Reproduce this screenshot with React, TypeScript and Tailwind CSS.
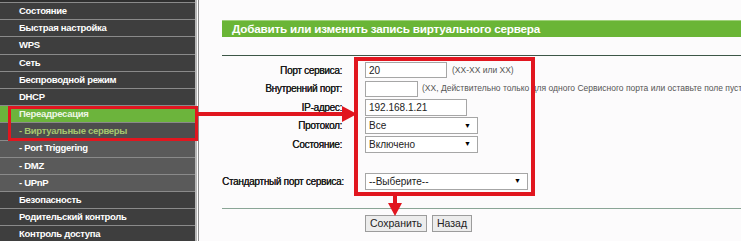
import React from "react";

type Item = { t: string; kind: "main" | "active" | "sub" | "current" };

const menu: Item[] = [
  { t: "Состояние", kind: "main" },
  { t: "Быстрая настройка", kind: "main" },
  { t: "WPS", kind: "main" },
  { t: "Сеть", kind: "main" },
  { t: "Беспроводной режим", kind: "main" },
  { t: "DHCP", kind: "main" },
  { t: "Переадресация", kind: "active" },
  { t: "- Виртуальные серверы", kind: "current" },
  { t: "- Port Triggering", kind: "sub" },
  { t: "- DMZ", kind: "sub" },
  { t: "- UPnP", kind: "sub" },
  { t: "Безопасность", kind: "main" },
  { t: "Родительский контроль", kind: "main" },
  { t: "Контроль доступа", kind: "main" },
];

function rowClass(kind: Item["kind"]) {
  if (kind === "active") return "bg-[#6cb43c] text-[#eef7e4]";
  if (kind === "current") return "bg-[#4d4d4d] text-[#a5c76f]";
  if (kind === "sub") return "bg-[#5a5a5a] text-white";
  return "bg-[#3e3e3e] text-white";
}

function Select({ value, w }: { value: string; w: string }) {
  return (
    <div className={`flex h-[17px] items-center justify-between border border-[#a6a6a6] bg-white pl-[3px] pr-[6px] text-[10px] text-[#222] ${w}`}>
      <span>{value}</span>
      <span className="text-[7px] text-black">▼</span>
    </div>
  );
}

function Row({ label, children }: { label: string; children?: React.ReactNode }) {
  return (
    <div className="flex h-[18.5px] items-center">
      <div className="w-[120px] shrink-0 whitespace-nowrap text-right text-[10px] tracking-[-0.3px] text-[#1a1a1a] [text-shadow:0.2px_0_0_#1a1a1a]">
        {label}
      </div>
      <div className="ml-[23px] flex items-center">{children}</div>
    </div>
  );
}

export default function App() {
  return (
    <div
      className="relative flex h-[241px] w-[741px] overflow-hidden bg-[#fcfbfc]"
      style={{ fontFamily: '"Liberation Sans", Arial, sans-serif' }}
    >
      <aside className="h-full w-[197px] shrink-0 border-r-2 border-[#b9b9b9] bg-[#2f2f2f] pt-[2px]">
        {menu.map((m) => (
          <div
            key={m.t}
            className={`flex h-[17.2px] items-center border-t border-[#8a8a8a] pl-[19px] text-[9.5px] font-bold tracking-[-0.3px] ${rowClass(m.kind)}`}
          >
            {m.t}
          </div>
        ))}
      </aside>
      <div className="w-[1px] shrink-0 bg-white" />
      <div className="w-[1px] shrink-0 bg-[#8c8c8c]" />
      <main className="flex-1 overflow-hidden pl-[23px] pt-[20px]">
        <div className="h-[17px] w-[700px] border-t border-[#9fd17a] bg-[#6ab536] pl-[10px] text-[11.7px] font-bold leading-[16px] tracking-[-0.2px] text-white">
          Добавить или изменить запись виртуального сервера
        </div>
        <div className="mt-[18px] h-[1px] w-[700px] bg-[#3d5647]" />
        <div className="mt-[5px]">
          <Row label="Порт сервиса:">
            <div className="flex h-[16px] w-[82px] items-center border border-[#a6a6a6] bg-white pl-[3px] text-[10px] text-[#222]">20</div>
            <span className="ml-[5px] whitespace-nowrap text-[8.5px] text-[#555]">(XX-XX или XX)</span>
          </Row>
          <Row label="Внутренний порт:">
            <div className="h-[16px] w-[53px] border border-[#a6a6a6] bg-white" />
            <span className="ml-[4px] whitespace-nowrap text-[8.5px] text-[#555]">
              (XX, Действительно только для одного Сервисного порта или оставьте поле пустым)
            </span>
          </Row>
          <Row label="IP-адрес:">
            <div className="flex h-[17px] w-[102px] items-center border border-[#a6a6a6] bg-white pl-[3px] text-[10px] text-[#222]">192.168.1.21</div>
          </Row>
          <Row label="Протокол:">
            <Select value="Все" w="w-[113px]" />
          </Row>
          <Row label="Состояние:">
            <Select value="Включено" w="w-[113px]" />
          </Row>
          <Row label="" />
          <Row label="Стандартный порт сервиса:">
            <Select value="--Выберите--" w="w-[163px]" />
          </Row>
        </div>
        <div className="mt-[17.5px] h-[1px] w-[700px] bg-[#8aa596]" />
        <div className="mt-[6px] flex gap-[5px] pl-[143px]">
          <button className="h-[17px] w-[62px] border border-[#9c9c9c] bg-[#ececec] text-[10.5px] text-[#222]">Сохранить</button>
          <button className="h-[17px] w-[40px] border border-[#9c9c9c] bg-[#ececec] text-[10.5px] text-[#222]">Назад</button>
        </div>
      </main>

      <div className="pointer-events-none absolute left-[354px] top-[57px] h-[139px] w-[181px] border-4 border-[#e1161f]" />
      <div className="pointer-events-none absolute left-[8px] top-[106px] h-[35px] w-[190px] border-[3.5px] border-[#e1161f]" />
      <svg className="pointer-events-none absolute left-0 top-0" width="741" height="241" viewBox="0 0 741 241">
        <rect x="197" y="112" width="147" height="4" fill="#e1161f" />
        <polygon points="342,106 357,114 342,122" fill="#e1161f" />
        <rect x="393" y="196" width="4" height="9" fill="#e1161f" />
        <polygon points="388,203 402,203 395,216" fill="#e1161f" />
      </svg>
    </div>
  );
}
